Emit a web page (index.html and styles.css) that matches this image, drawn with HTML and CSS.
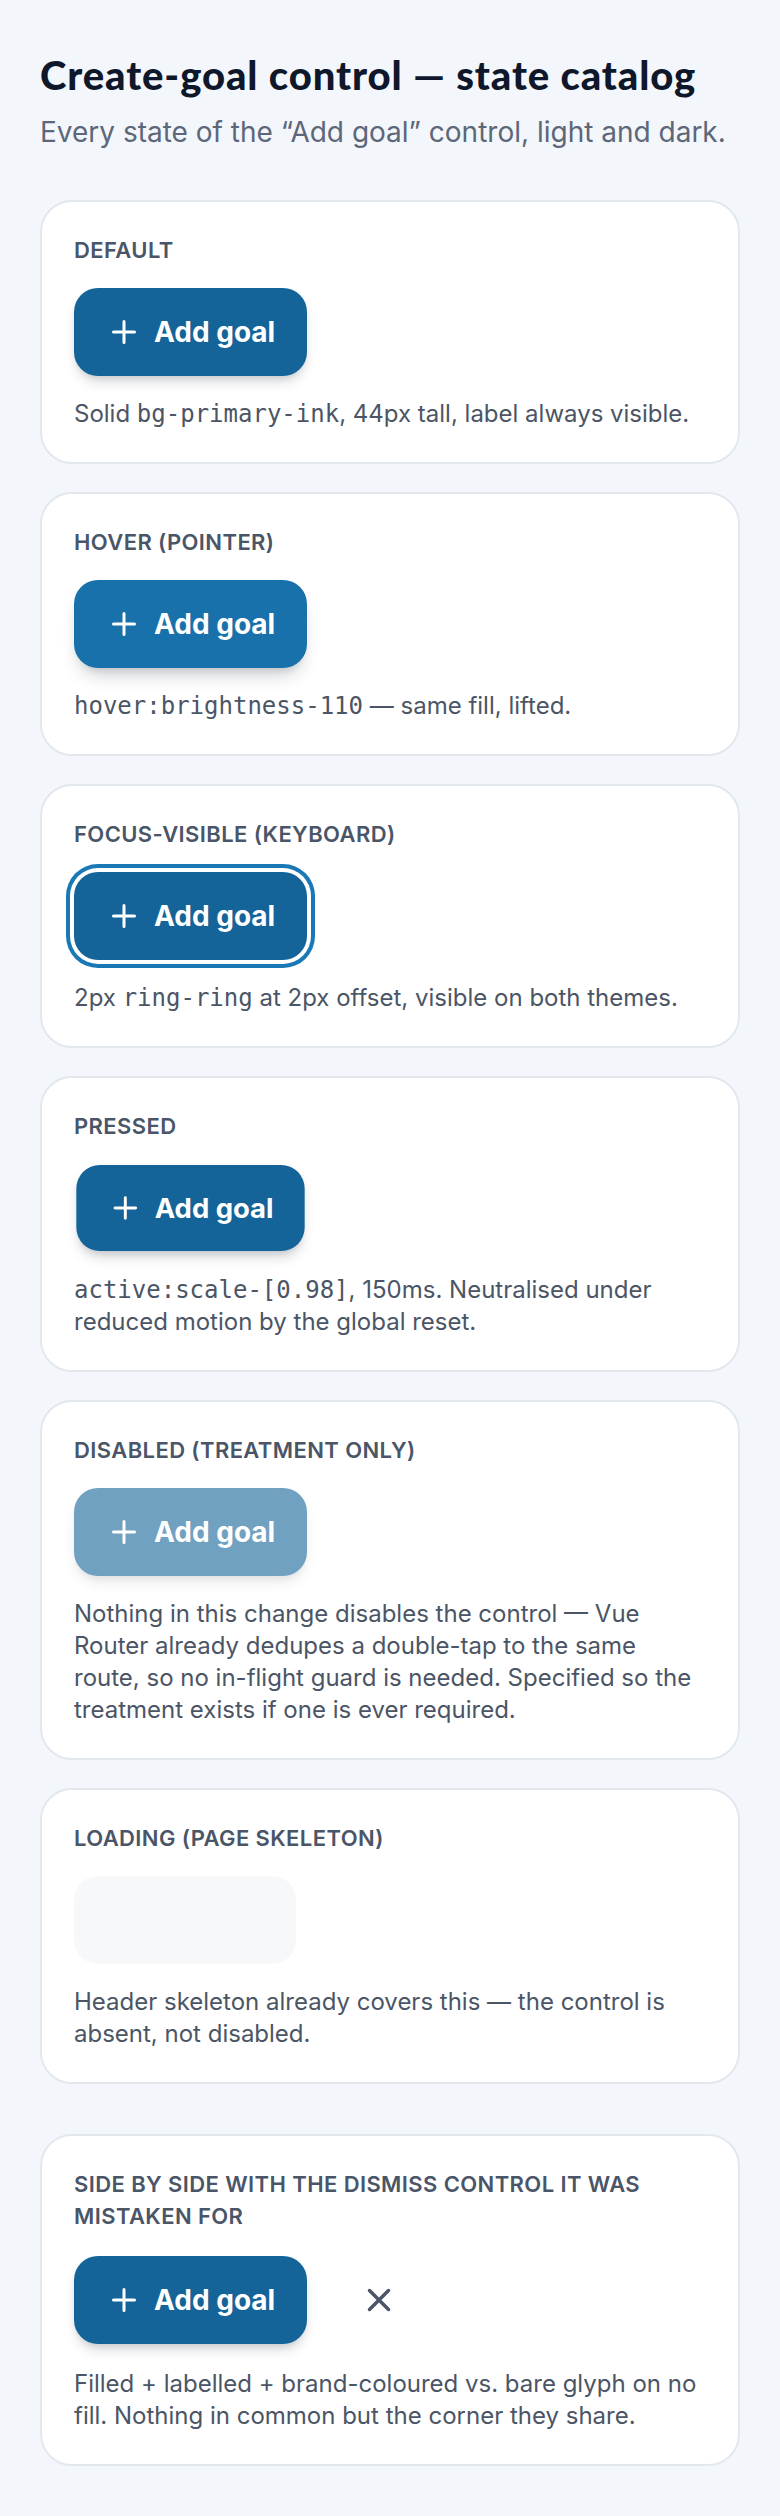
FILE: index.html
```html
<!DOCTYPE html>
<html lang="en">

<head>
    <meta charset="utf-8">
    <title>Create-goal control — state catalog</title>
    <link rel="stylesheet" href="styles.css">
</head>

<body>

    <main class="catalog">

        <header class="catalog-head">
            <h1>Create-goal control — state catalog</h1>
            <p class="catalog-sub">Every state of the “Add goal” control, light and dark.</p>
        </header>

        <section class="states">

            <!-- Default -->
            <article class="state-card">
                <h2 class="state-label">Default</h2>
                <div class="state-demo">
                    <button class="add-goal" type="button">
                        <svg class="add-goal-icon" viewBox="0 0 24 24"><path d="M12 5v14M5 12h14" /></svg>
                        <span>Add goal</span>
                    </button>
                </div>
                <p class="state-note">Solid <code>bg-primary-ink</code>, 44px tall, label always visible.</p>
            </article>

            <!-- Hover -->
            <article class="state-card">
                <h2 class="state-label">Hover (pointer)</h2>
                <div class="state-demo">
                    <button class="add-goal is-hover" type="button">
                        <svg class="add-goal-icon" viewBox="0 0 24 24"><path d="M12 5v14M5 12h14" /></svg>
                        <span>Add goal</span>
                    </button>
                </div>
                <p class="state-note"><code>hover:brightness-110</code> — same fill, lifted.</p>
            </article>

            <!-- Focus visible -->
            <article class="state-card">
                <h2 class="state-label">Focus-visible (keyboard)</h2>
                <div class="state-demo">
                    <button class="add-goal is-focus" type="button">
                        <svg class="add-goal-icon" viewBox="0 0 24 24"><path d="M12 5v14M5 12h14" /></svg>
                        <span>Add goal</span>
                    </button>
                </div>
                <p class="state-note">2px <code>ring-ring</code> at 2px offset, visible on both themes.</p>
            </article>

            <!-- Pressed -->
            <article class="state-card">
                <h2 class="state-label">Pressed</h2>
                <div class="state-demo">
                    <button class="add-goal is-pressed" type="button">
                        <svg class="add-goal-icon" viewBox="0 0 24 24"><path d="M12 5v14M5 12h14" /></svg>
                        <span>Add goal</span>
                    </button>
                </div>
                <p class="state-note"><code>active:scale-[0.98]</code>, 150ms. Neutralised under reduced motion by the global reset.</p>
            </article>

            <!-- Disabled -->
            <article class="state-card">
                <h2 class="state-label">Disabled (treatment only)</h2>
                <div class="state-demo">
                    <button class="add-goal" type="button" disabled>
                        <svg class="add-goal-icon" viewBox="0 0 24 24"><path d="M12 5v14M5 12h14" /></svg>
                        <span>Add goal</span>
                    </button>
                </div>
                <p class="state-note">Nothing in this change disables the control — Vue Router already dedupes a double-tap to the same route, so no in-flight guard is needed. Specified so the treatment exists if one is ever required.</p>
            </article>

            <!-- Loading -->
            <article class="state-card">
                <h2 class="state-label">Loading (page skeleton)</h2>
                <div class="state-demo">
                    <div class="skeleton"></div>
                </div>
                <p class="state-note">Header skeleton already covers this — the control is absent, not disabled.</p>
            </article>

        </section>

        <section class="compare">
            <article class="state-card">
                <h2 class="state-label">Side by side with the dismiss control it was mistaken for</h2>
                <div class="state-demo">
                    <button class="add-goal" type="button">
                        <svg class="add-goal-icon" viewBox="0 0 24 24"><path d="M12 5v14M5 12h14" /></svg>
                        <span>Add goal</span>
                    </button>
                    <button class="dismiss" type="button" aria-label="Dismiss">
                        <svg viewBox="0 0 24 24"><path d="M18 6 6 18M6 6l12 12" /></svg>
                    </button>
                </div>
                <p class="state-note">Filled + labelled + brand-coloured vs. bare glyph on no fill. Nothing in common but the corner they share.</p>
            </article>
        </section>

    </main>

</body>

</html>
```

FILE: styles.css
```css
body {
    margin: 0;
    background-color: #f3f6fa;
    color: #0f172a;
    font-family: Inter, "Noto Sans", sans-serif;
}

.catalog {
    padding: 50px 40px 48px;
}

.catalog-head h1 {
    margin: 0;
    font-family: Lato, "Noto Sans", sans-serif;
    font-weight: 900;
    font-size: 40px;
    line-height: 50px;
    letter-spacing: 0.9px;
    color: #0f172a;
}

.catalog-sub {
    margin: 12px 0 0;
    font-size: 28px;
    line-height: 40px;
    color: #5c6779;
}

.states {
    margin-top: 48px;
    display: flex;
    flex-direction: column;
    gap: 28px;
}

.compare {
    margin-top: 50px;
}

.state-card {
    background-color: #fff;
    border: 2px solid #e3e8ef;
    border-radius: 32px;
    padding: 32px;
    display: flex;
    flex-direction: column;
    gap: 22px;
}

.compare .state-card {
    gap: 24px;
}

.state-label {
    margin: 0;
    font-size: 22px;
    line-height: 32px;
    font-weight: 600;
    letter-spacing: 0.4px;
    text-transform: uppercase;
    color: #4a5568;
}

.state-note {
    margin: 0;
    font-size: 24px;
    line-height: 32px;
    color: #4b5565;
}

.state-note code {
    font-family: Menlo, "DejaVu Sans Mono", monospace;
    font-size: 24px;
    line-height: 1;
}

.state-demo {
    display: flex;
    align-items: center;
    gap: 28px;
}

/* the control itself */
.add-goal {
    height: 88px;
    padding: 0 32px;
    border: none;
    border-radius: 24px;
    background-color: #146499;
    color: #fff;
    display: inline-flex;
    align-items: center;
    gap: 12px;
    font-family: Inter, sans-serif;
    font-weight: 700;
    font-size: 28px;
    box-shadow: 0 8px 14px -4px rgba(15, 23, 42, 0.2), 0 4px 8px -4px rgba(15, 23, 42, 0.12);
    cursor: pointer;
}

.add-goal-icon {
    width: 36px;
    height: 36px;
    fill: none;
    stroke: currentColor;
    stroke-width: 2;
    stroke-linecap: round;
}

.add-goal.is-hover {
    background-color: #1871aa;
    box-shadow: 0 12px 18px -6px rgba(15, 23, 42, 0.22), 0 6px 10px -6px rgba(15, 23, 42, 0.14);
}

.add-goal.is-focus {
    box-shadow: 0 0 0 4px #fff, 0 0 0 8px #1b78b6;
}

.add-goal.is-pressed {
    transform: scale(0.98);
}

.add-goal:disabled {
    opacity: 0.6;
    cursor: default;
}

.skeleton {
    width: 222px;
    height: 88px;
    border-radius: 24px;
    background-color: #f6f8fa;
}

.dismiss {
    width: 88px;
    height: 88px;
    padding: 0;
    border: none;
    background: none;
    color: #4b5565;
    display: inline-flex;
    align-items: center;
    justify-content: center;
    cursor: pointer;
}

.dismiss svg {
    width: 38px;
    height: 38px;
    fill: none;
    stroke: currentColor;
    stroke-width: 2.2;
    stroke-linecap: round;
}
```
